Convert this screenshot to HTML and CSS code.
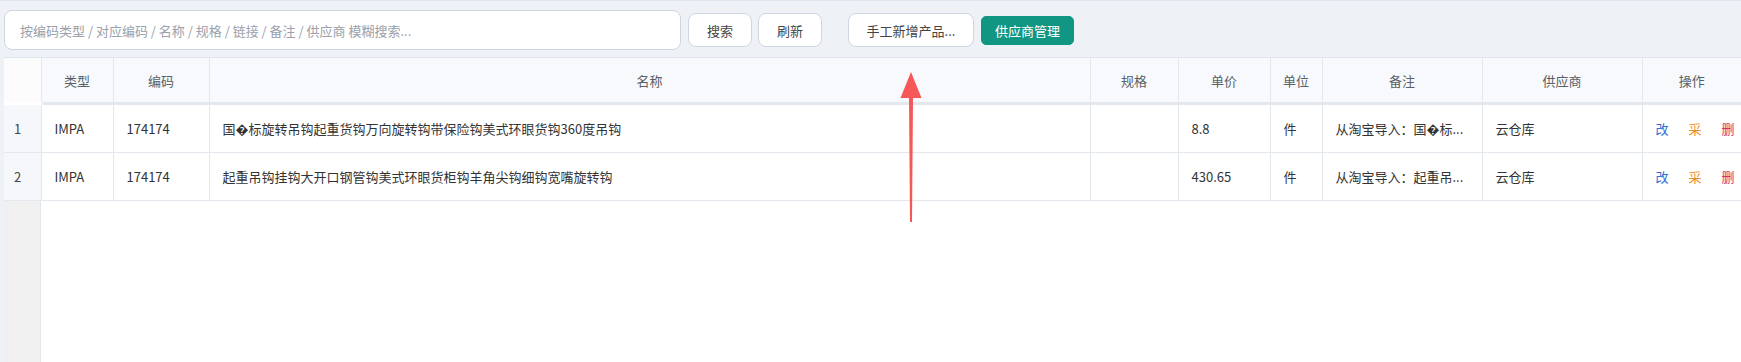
FILE: index.html
```html
<!DOCTYPE html>
<html lang="zh-CN">
<head>
  <meta charset="UTF-8">
  <title>产品库</title>
  <meta name="viewport" content="width=device-width,initial-scale=1">
  <link rel="stylesheet" href="styles.css">
</head>
<body>
  <div class="toolbar">
    <input type="text" class="search" placeholder="按编码类型 / 对应编码 / 名称 / 规格 / 链接 / 备注 / 供应商 模糊搜索...">
    <button class="btn">搜索</button>
    <button class="btn">刷新</button>
    <button class="btn btn-add">手工新增产品...</button>
    <button class="btn btn-main">供应商管理</button>
  </div>

  <div class="grid-wrap">
    <table class="grid">
      <colgroup>
        <col style="width:37px"><col style="width:72px"><col style="width:96px"><col style="width:881px">
        <col style="width:88px"><col style="width:92px"><col style="width:52px"><col style="width:160px">
        <col style="width:160px"><col style="width:99px">
      </colgroup>
      <thead>
        <tr>
          <th class="corner"></th>
          <th>类型</th>
          <th>编码</th>
          <th>名称</th>
          <th>规格</th>
          <th>单价</th>
          <th>单位</th>
          <th>备注</th>
          <th>供应商</th>
          <th>操作</th>
        </tr>
      </thead>
      <tbody>
        <tr>
          <td class="num">1</td>
          <td>IMPA</td>
          <td>174174</td>
          <td>国�标旋转吊钩起重货钩万向旋转钩带保险钩美式环眼货钩360度吊钩</td>
          <td></td>
          <td>8.8</td>
          <td>件</td>
          <td class="ellip">从淘宝导入：国�标...</td>
          <td>云仓库</td>
          <td class="ops"><a class="op-edit">改</a><a class="op-buy">采</a><a class="op-del">删</a></td>
        </tr>
        <tr>
          <td class="num">2</td>
          <td>IMPA</td>
          <td>174174</td>
          <td>起重吊钩挂钩大开口钢管钩美式环眼货柜钩羊角尖钩细钩宽嘴旋转钩</td>
          <td></td>
          <td>430.65</td>
          <td>件</td>
          <td class="ellip">从淘宝导入：起重吊...</td>
          <td>云仓库</td>
          <td class="ops"><a class="op-edit">改</a><a class="op-buy">采</a><a class="op-del">删</a></td>
        </tr>
      </tbody>
    </table>
  </div>

  <!-- annotation arrow -->
  <svg class="arrow" width="40" height="160" viewBox="0 0 40 160">
    <polygon points="20,2 30.5,28 22,28 21,152 19,152 18,28 9.5,28" fill="#f65757"/>
  </svg>
</body>
</html>
```

FILE: styles.css
```css
html, body { height: 100%; }
body { margin: 0; background: #eef2f7; font-family: "Noto Sans CJK SC", "Noto Sans", sans-serif; font-size: 13px; color: #333; overflow: hidden; border-top: 1px solid #e2e7ef; box-sizing: border-box; }
.toolbar { display: flex; align-items: center; gap: 6px; padding: 9px 4px 7px 4px; }
.search { width: 677px; height: 40px; box-sizing: border-box; border: 1px solid #cdd5e1; border-radius: 8px; padding: 0 15px; font: inherit; font-size: 13px; color: #333; background: #fff; outline: none; margin-right: 1px; }
.search::placeholder { color: #9aa1ab; }
.btn { height: 34px; width: 64px; padding: 0; box-sizing: border-box; border: 1px solid #cfd6e2; border-radius: 8px; background: #fff; color: #444; font: inherit; font-size: 13px; white-space: nowrap; cursor: pointer; }
.btn:hover { background: #f5f8fc; }
.btn-add { margin-left: 20px; width: 126px; }
.btn-main { height: 29px; width: 93px; margin-left: 1px; background: #129684; border-color: #129684; color: #fff; border-radius: 5px; }
.btn-main:hover { background: #0f8172; }
.grid-wrap { margin-left: 4px; height: 320px; border-top: 1px solid #dfe5ee; background: linear-gradient(to right, #f0f0f0 36px, #e3e8ef 36px, #e3e8ef 37px, #fff 37px); }
.grid { border-collapse: collapse; table-layout: fixed; width: 1737px; }
.grid th { height: 44px; background: #f7f9fc; color: #5a5f66; font-weight: normal; text-align: center; border-left: 1px solid #e3e8ef; border-bottom: 3px solid #e3e8ef; padding: 0; }
.grid th.corner { background: #fcfcfd; border-left: none; border-bottom-color: #fff; }
.grid td { height: 47px; border: 1px solid #e3e8ef; border-top: none; padding: 0 0 0 13px; white-space: nowrap; overflow: hidden; background: #fff; }
.grid td.num { background: #f5f7fa; padding-left: 10px; color: #444; border-left: none; }
.grid td.ops { padding-left: 13px; border-right: none; }
.ops a { cursor: pointer; margin-right: 20px; }
.op-edit { color: #2a6ed4; }
.op-buy { color: #ef8a1f; }
.op-del { color: #d42d67; }
.arrow { position: absolute; left: 891px; top: 70px; }
```
